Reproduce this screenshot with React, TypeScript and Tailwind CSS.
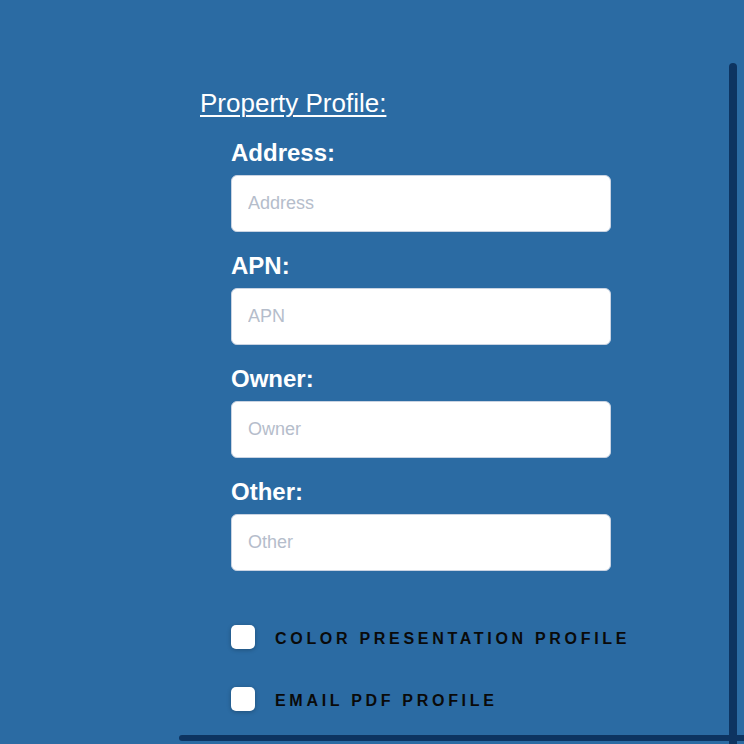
import { useState } from "react";

const fields = ["Address", "APN", "Owner", "Other"];

const options = [
  { id: "color", label: "Color Presentation Profile" },
  { id: "email", label: "Email PDF Profile" },
];

export default function App() {
  const [values, setValues] = useState<Record<string, string>>({});
  const [checked, setChecked] = useState<Record<string, boolean>>({});

  return (
    <div
      className="h-[744px] w-[744px] overflow-hidden bg-[#2b6ba3] pt-[63px] pl-[179px]"
      style={{ fontFamily: '"Liberation Sans", Arial, sans-serif' }}
    >
      <div className="flex h-full">
        {/* Form column */}
        <div className="flex w-[550px] flex-col">
          <div className="pl-[21px] pt-[24px]">
            <h2 className="text-[26px] leading-[32px] text-white underline decoration-2 underline-offset-[3px]">
              Property Profile:
            </h2>
          </div>

          <div className="mt-[20px] flex flex-col pl-[52px]">
            {fields.map((name) => (
              <div key={name} className="mb-[20px] flex flex-col">
                <label className="mb-[8px] text-[24px] font-bold leading-[28px] text-white">
                  {name}:
                </label>
                <input
                  placeholder={name}
                  value={values[name] ?? ""}
                  onChange={(e) =>
                    setValues({ ...values, [name]: e.target.value })
                  }
                  className="h-[57px] w-[380px] rounded-[6px] border border-[#c9d3e2] bg-white px-[16px] text-[18px] text-gray-700 outline-none placeholder:text-[#b5bdcb]"
                />
              </div>
            ))}
          </div>

          {/* Checkboxes */}
          <div className="mt-[34px] flex flex-col gap-[38px] pl-[52px]">
            {options.map((o) => (
              <label key={o.id} className="flex cursor-pointer items-center gap-[20px]">
                <button
                  type="button"
                  onClick={() => setChecked({ ...checked, [o.id]: !checked[o.id] })}
                  className="flex h-[24px] w-[24px] items-center justify-center rounded-[5px] bg-white shadow-[0_1px_4px_rgba(0,0,0,0.25)]"
                >
                  {checked[o.id] && (
                    <svg width="14" height="14" viewBox="0 0 24 24" fill="none" stroke="#0d3461" strokeWidth="3">
                      <path d="M4 12l5 5L20 6" />
                    </svg>
                  )}
                </button>
                <span className="mt-[3px] text-[16px] font-bold uppercase leading-none tracking-[3.7px] text-[#0a0a0a]">
                  {o.label}
                </span>
              </label>
            ))}
          </div>

          <div className="mt-[24px] mr-[-20px] h-[6px] rounded-l-full bg-[#0d3461]" />
        </div>

        {/* Right edge bar */}
        <div className="w-[8px] rounded-t-full bg-[#0d3461]" />
      </div>
    </div>
  );
}
